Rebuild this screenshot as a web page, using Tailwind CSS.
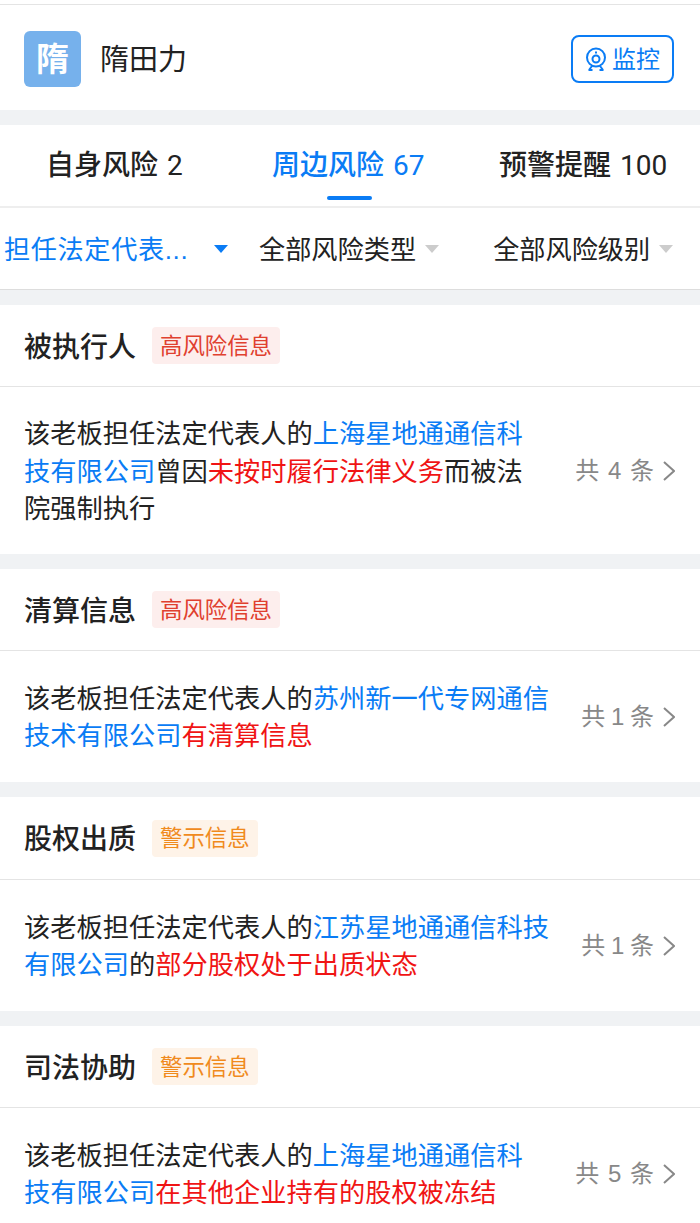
<!DOCTYPE html>
<html lang="zh-CN">

<head>
  <meta charset="UTF-8" />
  <meta name="viewport" content="width=device-width, initial-scale=1.0" />
  <title>周边风险</title>
  <script src="https://cdn.jsdelivr.net/npm/@tailwindcss/browser@4"></script>
</head>

<body class="bg-white h-[1223px] overflow-hidden font-['Liberation_Sans','Noto_Sans_CJK_SC',sans-serif] text-[#222]">
  <!-- boss header -->
  <div class="h-[106px] mt-1 border-t border-[#e4e4e4] flex items-center pl-6 pr-[26px] pt-[3px]">
    <div class="w-[57px] h-[56px] rounded-md bg-[#76b1ec] text-white text-[33px] font-bold pt-[1px] flex items-center justify-center">隋</div>
    <div class="ml-[19px] text-[29px] leading-none pt-[2px]">隋田力</div>
    <div class="ml-auto w-[103px] h-[48px] rounded-lg border-2 border-[#0a7cf5] text-[#0a7cf5] text-[24px] flex items-center justify-center gap-[5px]">
      <svg width="22" height="24" viewBox="0 0 22 24" fill="none" stroke="#0a7cf5" stroke-width="2">
        <circle cx="11" cy="10.5" r="9" />
        <circle cx="11" cy="12" r="3.5" />
        <path d="M11 4.5v2M7 19l-3 4M15 19l3 4M3.5 23h4M14.5 23h4" />
      </svg>
      <span class="pt-[2px]">监控</span>
    </div>
  </div>
  <div class="h-[15px] bg-[#f0f2f4]"></div>

  <!-- tabs -->
  <div class="h-[83px] border-b-2 border-[#eeeeee] flex text-[28px] font-medium font-['Roboto','Noto_Sans_CJK_SC',sans-serif] [word-spacing:2px] relative">
    <div class="absolute left-[327px] top-[71px] w-[45px] h-1 rounded-full bg-[#0a7cf5]"></div>
    <div class="w-[224px] pl-[46px] pt-[20px] whitespace-nowrap">自身风险 <span class="font-normal">2</span></div>
    <div class="w-[275px] pl-[48px] pt-[20px] whitespace-nowrap text-[#0a7cf5]">周边风险 <span class="font-normal">67</span></div>
    <div class="pt-[20px] whitespace-nowrap">预警提醒 <span class="font-normal">100</span></div>
  </div>

  <!-- filters -->
  <div class="h-[82px] border-b border-[#dddddd] flex items-center text-[26.2px] whitespace-nowrap pt-[4px]">
    <span class="ml-1 w-[210px] text-[#0a7cf5] tracking-[0.6px]">担任法定代表...</span>
    <span class="w-0 h-0 -mt-[4px] border-x-[7px] border-x-transparent border-t-[8px] border-t-[#0a7cf5]"></span>
    <span class="ml-[31px]">全部风险类型</span>
    <span class="ml-[9px] -mt-[4px] w-0 h-0 border-x-[7px] border-x-transparent border-t-[8px] border-t-[#cccccc]"></span>
    <span class="ml-[54px]">全部风险级别</span>
    <span class="ml-[9px] -mt-[4px] w-0 h-0 border-x-[7px] border-x-transparent border-t-[8px] border-t-[#cccccc]"></span>
  </div>
  <div class="h-[15px] bg-[#f0f2f4]"></div>

  <!-- 被执行人 -->
  <section>
    <div class="h-[82px] border-b border-[#e4e4e4] flex items-center pl-6 gap-4">
      <span class="text-[28px] font-medium pt-[4px]">被执行人</span>
      <span class="h-[37px] px-2 pt-[2px] rounded bg-[#fdeeed] text-[#e0402f] text-[22.4px] flex items-center">高风险信息</span>
    </div>
    <div class="h-[167px] flex items-center pl-6 pr-[25px]">
      <p class="w-[510px] mt-[4px] text-[26.25px] leading-[37.5px]">该老板担任法定代表人的<span class="text-[#0a7cf5]">上海星地通通信科技有限公司</span>曾因<span class="text-[#f01414]">未按时履行法律义务</span>而被法院强制执行</p>
      <div class="ml-auto flex items-center text-[24px] text-[#888888] whitespace-nowrap">
        <span class="[word-spacing:2px]">共 4 条</span>
        <svg class="ml-[9px]" width="12" height="20" viewBox="0 0 12 20" fill="none" stroke="#888888" stroke-width="2"><path d="M1 1l10 9-10 9" /></svg>
      </div>
    </div>
  </section>
  <div class="h-[15px] bg-[#f0f2f4]"></div>

  <!-- 清算信息 -->
  <section>
    <div class="h-[82px] border-b border-[#e4e4e4] flex items-center pl-6 gap-4">
      <span class="text-[28px] font-medium pt-[4px]">清算信息</span>
      <span class="h-[37px] px-2 pt-[2px] rounded bg-[#fdeeed] text-[#e0402f] text-[22.4px] flex items-center">高风险信息</span>
    </div>
    <div class="h-[131px] flex items-center pl-6 pr-[25px]">
      <p class="w-[530px] mt-[3px] text-[26.25px] leading-[37.5px]">该老板担任法定代表人的<span class="text-[#0a7cf5]">苏州新一代专网通信技术有限公司</span><span class="text-[#f01414]">有清算信息</span></p>
      <div class="ml-auto flex items-center text-[24px] text-[#888888] whitespace-nowrap">
        <span class="[word-spacing:-1px]">共 1 条</span>
        <svg class="ml-[9px]" width="12" height="20" viewBox="0 0 12 20" fill="none" stroke="#888888" stroke-width="2"><path d="M1 1l10 9-10 9" /></svg>
      </div>
    </div>
  </section>
  <div class="h-[15px] bg-[#f0f2f4]"></div>

  <!-- 股权出质 -->
  <section>
    <div class="h-[83px] border-b border-[#e4e4e4] flex items-center pl-6 gap-4">
      <span class="text-[28px] font-medium pt-[4px]">股权出质</span>
      <span class="h-[37px] px-2 pt-[2px] rounded bg-[#fef3e8] text-[#f08a1d] text-[22.4px] flex items-center">警示信息</span>
    </div>
    <div class="h-[131px] flex items-center pl-6 pr-[25px]">
      <p class="w-[530px] mt-[3px] text-[26.25px] leading-[37.5px]">该老板担任法定代表人的<span class="text-[#0a7cf5]">江苏星地通通信科技有限公司</span>的<span class="text-[#f01414]">部分股权处于出质状态</span></p>
      <div class="ml-auto flex items-center text-[24px] text-[#888888] whitespace-nowrap">
        <span class="[word-spacing:-1px]">共 1 条</span>
        <svg class="ml-[9px]" width="12" height="20" viewBox="0 0 12 20" fill="none" stroke="#888888" stroke-width="2"><path d="M1 1l10 9-10 9" /></svg>
      </div>
    </div>
  </section>
  <div class="h-[15px] bg-[#f0f2f4]"></div>

  <!-- 司法协助 -->
  <section>
    <div class="h-[82px] border-b border-[#e4e4e4] flex items-center pl-6 gap-4">
      <span class="text-[28px] font-medium pt-[4px]">司法协助</span>
      <span class="h-[37px] px-2 pt-[2px] rounded bg-[#fef3e8] text-[#f08a1d] text-[22.4px] flex items-center">警示信息</span>
    </div>
    <div class="h-[131px] flex items-center pl-6 pr-[25px]">
      <p class="w-[510px] mt-[3px] text-[26.25px] leading-[37.5px]">该老板担任法定代表人的<span class="text-[#0a7cf5]">上海星地通通信科技有限公司</span><span class="text-[#f01414]">在其他企业持有的股权被冻结</span></p>
      <div class="ml-auto flex items-center text-[24px] text-[#888888] whitespace-nowrap">
        <span class="[word-spacing:2px]">共 5 条</span>
        <svg class="ml-[9px]" width="12" height="20" viewBox="0 0 12 20" fill="none" stroke="#888888" stroke-width="2"><path d="M1 1l10 9-10 9" /></svg>
      </div>
    </div>
  </section>
</body>

</html>
